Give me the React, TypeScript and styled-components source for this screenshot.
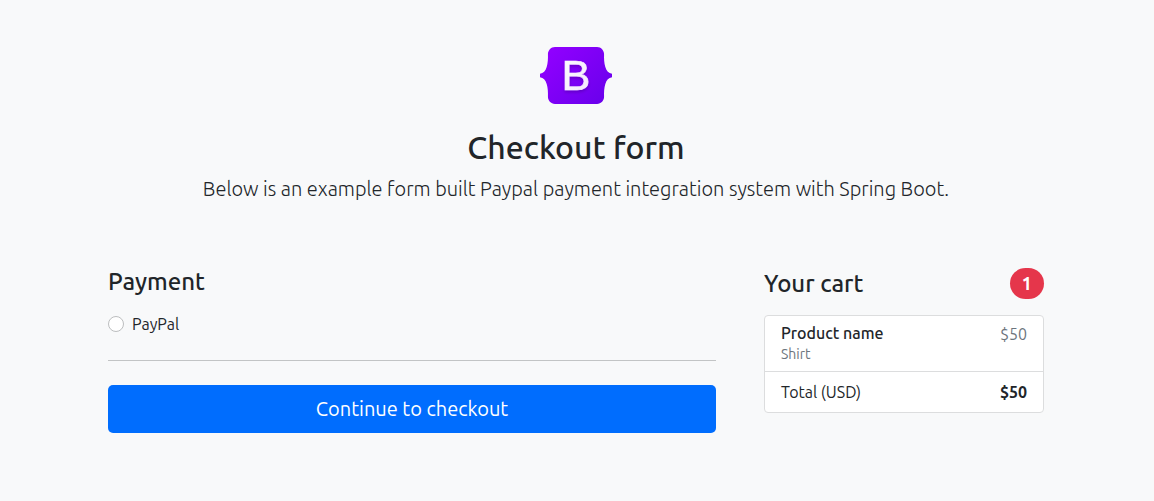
import React from "react";
import styled, { createGlobalStyle } from "styled-components";

const GlobalStyle = createGlobalStyle`
  *, *::before, *::after { box-sizing: border-box; }
  body {
    margin: 0;
    padding-right: 2px;
    background: #f8f9fa;
    color: #212529;
    font-family: Ubuntu, "Noto Sans", sans-serif;
    font-size: 16px;
    line-height: 24px;
  }
`;

const Container = styled.div`
  max-width: 960px;
  margin: 0 auto;
  padding: 0 12px;
`;

const Intro = styled.header`
  padding: 47px 0 64px;
  text-align: center;
`;

const Logo = styled.svg`
  display: block;
  width: 72px;
  height: 57px;
  margin: 0 auto 24px;
`;

const Title = styled.h1`
  margin: 0 0 8px;
  font-size: 32px;
  line-height: 38px;
  font-weight: 500;
`;

const Lead = styled.p`
  margin: 0;
  font-size: 20px;
  line-height: 30px;
  font-weight: 300;
`;

const Columns = styled.main`
  display: grid;
  grid-template-columns: minmax(0, 1fr) 280px;
  gap: 48px;
  align-items: start;

  @media (max-width: 767px) {
    grid-template-columns: minmax(0, 1fr);
  }
`;

const Heading = styled.h2`
  margin: 0;
  font-size: 24px;
  line-height: 28px;
  font-weight: 500;
`;

const Choice = styled.label`
  display: flex;
  align-items: center;
  gap: 8px;
  width: max-content;
  margin-top: 16px;
`;

const Radio = styled.input`
  appearance: none;
  width: 16px;
  height: 16px;
  margin: 0;
  border: 1px solid #bcbebf;
  border-radius: 50%;
  background: #fff;

  &:checked {
    border: 5px solid #006dfe;
  }
`;

const Divider = styled.hr`
  height: 1px;
  margin: 24px 0;
  border: 0;
  background: #c2c4c5;
`;

const Submit = styled.button`
  display: block;
  width: 100%;
  padding: 9px 16px;
  border: 0;
  border-radius: 5px;
  background: #006dfe;
  color: #fff;
  font: inherit;
  font-size: 20px;
  line-height: 30px;
  cursor: pointer;
`;

const CartHeader = styled.div`
  display: flex;
  align-items: center;
  justify-content: space-between;
  margin-bottom: 16px;
`;

const Badge = styled.span`
  padding: 6px 12px;
  border-radius: 16px;
  background: #e5364b;
  color: #fff;
  font-size: 18px;
  line-height: 19px;
  font-weight: 700;
`;

const CartList = styled.ul`
  margin: 0;
  padding: 0;
  list-style: none;
  border: 1px solid #dcddde;
  border-radius: 4px;
  background: #fff;
`;

const CartItem = styled.li`
  display: flex;
  justify-content: space-between;
  padding: 8px 16px;

  & + & {
    border-top: 1px solid #dcddde;
  }
`;

const ProductName = styled.h3`
  margin: 0 0 2px;
  font-size: 16px;
  line-height: 19px;
  font-weight: 500;
`;

const Detail = styled.small`
  display: block;
  color: #6c757d;
  font-size: 14px;
  line-height: 18px;
`;

const Price = styled.span`
  color: #6c757d;
  line-height: 20px;
`;

export default function App() {
  return (
    <>
      <GlobalStyle />
      <Container>
        <Intro>
          <Logo viewBox="0 0 118 94" preserveAspectRatio="none" role="img" aria-label="Bootstrap">
            <defs>
              <linearGradient id="shell" x1="15" y1="2" x2="105" y2="92" gradientUnits="userSpaceOnUse">
                <stop stopColor="#9100ff" />
                <stop offset="1" stopColor="#6a00ec" />
              </linearGradient>
              <linearGradient id="letter" x1="0" y1="0" x2="1" y2="1">
                <stop stopColor="#fff" />
                <stop offset="1" stopColor="#f1e5fc" />
              </linearGradient>
              <filter id="shade" x="-20%" y="-20%" width="140%" height="140%">
                <feDropShadow dx="0" dy="3" stdDeviation="3" floodOpacity=".2" />
              </filter>
            </defs>
            <path
              fill="url(#shell)"
              d="M24.509 0c-6.733 0-11.715 5.893-11.492 12.284.214 6.14-.064 14.092-2.066 20.577C8.943 39.365 5.547 43.485 0 44.014v5.972c5.547.529 8.943 4.649 10.951 11.153 2.002 6.485 2.28 14.437 2.066 20.577C12.794 88.106 17.776 94 24.51 94H93.5c6.733 0 11.714-5.893 11.491-12.284-.214-6.14.064-14.092 2.066-20.577 2.009-6.504 5.396-10.624 10.943-11.153v-5.972c-5.547-.529-8.934-4.649-10.943-11.153-2.002-6.484-2.28-14.437-2.066-20.577C105.214 5.894 100.233 0 93.5 0H24.508z"
            />
            <text x="59" y="71" textAnchor="middle" fontFamily="Liberation Sans, sans-serif" fontSize="71" fill="url(#letter)" stroke="url(#letter)" strokeWidth="1" filter="url(#shade)">
              B
            </text>
          </Logo>
          <Title>Checkout form</Title>
          <Lead>Below is an example form built Paypal payment integration system with Spring Boot.</Lead>
        </Intro>
        <Columns>
          <form onSubmit={(event) => event.preventDefault()}>
            <Heading>Payment</Heading>
            <Choice htmlFor="paypal">
              <Radio id="paypal" type="radio" name="method" />
              PayPal
            </Choice>
            <Divider />
            <Submit type="submit">Continue to checkout</Submit>
          </form>
          <section aria-labelledby="cart-title">
            <CartHeader>
              <Heading id="cart-title">Your cart</Heading>
              <Badge>1</Badge>
            </CartHeader>
            <CartList>
              <CartItem>
                <div>
                  <ProductName>Product name</ProductName>
                  <Detail>Shirt</Detail>
                </div>
                <Price>$50</Price>
              </CartItem>
              <CartItem>
                <span>Total (USD)</span>
                <strong>$50</strong>
              </CartItem>
            </CartList>
          </section>
        </Columns>
      </Container>
    </>
  );
}
